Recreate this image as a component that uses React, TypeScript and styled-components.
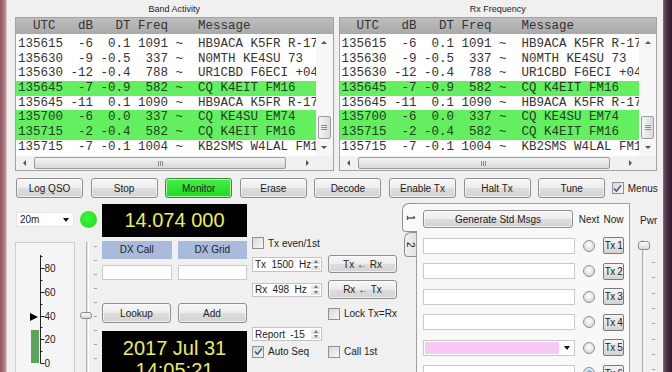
import React from 'react'
import styled, { createGlobalStyle, css } from 'styled-components'

type Decode = { utc: string; db: number; dt: string; freq: number; msg: string; cq?: boolean }

const decodes: Decode[] = [
  { utc: '135615', db: -6, dt: '0.1', freq: 1091, msg: 'HB9ACA K5FR R-17' },
  { utc: '135630', db: -9, dt: '-0.5', freq: 337, msg: 'N0MTH KE4SU 73' },
  { utc: '135630', db: -12, dt: '-0.4', freq: 788, msg: 'UR1CBD F6ECI +04' },
  { utc: '135645', db: -7, dt: '-0.9', freq: 582, msg: 'CQ K4EIT FM16', cq: true },
  { utc: '135645', db: -11, dt: '0.1', freq: 1090, msg: 'HB9ACA K5FR R-17' },
  { utc: '135700', db: -6, dt: '0.0', freq: 337, msg: 'CQ KE4SU EM74', cq: true },
  { utc: '135715', db: -2, dt: '-0.4', freq: 582, msg: 'CQ K4EIT FM16', cq: true },
  { utc: '135715', db: -7, dt: '-0.1', freq: 1004, msg: 'KB2SMS W4LAL FM18' },
]

const formatDecode = (d: Decode) =>
  `${d.utc} ${String(d.db).padStart(3)} ${d.dt.padStart(4)} ${String(d.freq).padStart(4)} ~  ${d.msg}`

const mainButtons = ['Log QSO', 'Stop', 'Monitor', 'Erase', 'Decode', 'Enable Tx', 'Halt Tx', 'Tune']

const txRows = [1, 2, 3, 4, 5, 6]

const GlobalStyle = createGlobalStyle`
  * { box-sizing: border-box; }
  html, body { margin: 0; padding: 0; background: #f0f0f0; }
  body {
    font-family: 'Liberation Sans', Arial, sans-serif;
    font-size: 10px;
    color: #222;
  }
`

const mono = css`
  font-family: 'Liberation Mono', 'Courier New', monospace;
  font-size: 12.5px;
  white-space: pre;
`

const DecodePanel: React.FC<{ title: string }> = ({ title }) => (
  <Panel>
    <PanelTitle>{title}</PanelTitle>
    <TableFrame>
      <TableHeader>{'  UTC   dB   DT Freq    Message'}</TableHeader>
      <TableBody>
        <RowList>
          {decodes.map((d, i) => (
            <DecodeRow key={i} $cq={d.cq}>
              {formatDecode(d)}
            </DecodeRow>
          ))}
        </RowList>
        <VScroll>
          <VScrollBtn>
            <Arrow $dir="up" />
          </VScrollBtn>
          <VTrack>
            <VThumb>
              <GripH />
            </VThumb>
          </VTrack>
          <VScrollBtn>
            <Arrow $dir="down" />
          </VScrollBtn>
        </VScroll>
      </TableBody>
      <HScroll>
        <HScrollBtn>
          <Arrow $dir="left" />
        </HScrollBtn>
        <HTrack>
          <HThumb>
            <GripV />
          </HThumb>
        </HTrack>
        <HScrollBtn>
          <Arrow $dir="right" />
        </HScrollBtn>
        <Corner />
      </HScroll>
    </TableFrame>
  </Panel>
)

const Check: React.FC<{ checked?: boolean; label: string }> = ({ checked, label }) => (
  <CheckItem>
    <CheckBox>
      {checked && (
        <svg width="9" height="9" viewBox="0 0 9 9">
          <path d="M1 4.6 L3.4 7.2 L8 1.4" fill="none" stroke="#3b4d7e" strokeWidth="1.5" />
        </svg>
      )}
    </CheckBox>
    {label}
  </CheckItem>
)

const Spin: React.FC<{ text: string; h?: number }> = ({ text, h = 15 }) => (
  <SpinBox $h={h}>
    <span>{text}</span>
    <SpinArrows>
      <SpinArrow />
      <SpinArrow $down />
    </SpinArrows>
  </SpinBox>
)

const Meter: React.FC = () => {
  const y = (v: number) => 120 - v * 1.1875
  const ticks = [0, 10, 20, 30, 40, 50, 60, 70, 80, 90]
  return (
    <MeterPanel>
      <svg width="58" height="140">
        <rect x="15" y={y(27.8)} width="8" height={y(0) - y(27.8)} fill="#5aa55a" />
        <line x1="24.5" y1={y(91)} x2="24.5" y2={y(0) + 0.5} stroke="#222" />
        {ticks.map((v) => (
          <line
            key={v}
            x1="24.5"
            x2={v % 20 === 0 ? 28.5 : 26.5}
            y1={Math.round(y(v)) + 0.5}
            y2={Math.round(y(v)) + 0.5}
            stroke="#222"
          />
        ))}
        {[0, 20, 40, 60, 80].map((v) => (
          <text key={v} x="28.5" y={Math.round(y(v)) + 4} fontSize="10" fill="#222" fontFamily="Liberation Sans, Arial, sans-serif">
            {v}
          </text>
        ))}
        <polygon points={`14,${y(38.7) - 4} 22,${y(38.7)} 14,${y(38.7) + 4}`} fill="#000" />
      </svg>
    </MeterPanel>
  )
}

type SliderProps = {
  w: number
  grooveX: number
  handleX: number
  handleY: number
  handleW: number
  handleH: number
  tickX: number
  tickTop: number
  pitch: number
}

const VSlider: React.FC<SliderProps> = (p) => (
  <SliderBox $w={p.w}>
    <Groove $x={p.grooveX} />
    <Ticks $x={p.tickX} $top={p.tickTop} $pitch={p.pitch} />
    <Handle $x={p.handleX} $y={p.handleY} $w={p.handleW} $h={p.handleH} />
  </SliderBox>
)

export default function App() {
  return (
    <>
      <GlobalStyle />
      <Screen>
        <LeftFrame />
        <Window>
          <TopSection>
            <DecodePanel title="Band Activity" />
            <DecodePanel title="Rx Frequency" />
          </TopSection>

          <ButtonRow>
            {mainButtons.map((b) => (
              <PushButton key={b} $on={b === 'Monitor'}>
                {b}
              </PushButton>
            ))}
            <MenusCheck>
              <Check checked label="Menus" />
            </MenusCheck>
          </ButtonRow>

          <Controls>
            <ColumnA>
              <BandCombo>
                20m
                <DropArrow />
              </BandCombo>
              <Meter />
            </ColumnA>

            <ColumnB>
              <Led />
              <SliderWrap>
                <VSlider w={17} grooveX={6} handleX={0} handleY={70} handleW={12} handleH={7} tickX={14} tickTop={4} pitch={14} />
              </SliderWrap>
            </ColumnB>

            <ColumnC>
              <FreqDisplay>14.074 000</FreqDisplay>
              <PairRow $top={4}>
                <DxLabel>DX Call</DxLabel>
                <DxLabel>DX Grid</DxLabel>
              </PairRow>
              <PairRow $top={6}>
                <TextField $h={15} />
                <TextField $h={15} />
              </PairRow>
              <PairRow $top={23}>
                <PushButton $w={69} $h={20}>Lookup</PushButton>
                <PushButton $w={69} $h={20}>Add</PushButton>
              </PairRow>
              <DateDisplay>
                <div>2017 Jul 31</div>
                <div>14:05:21</div>
              </DateDisplay>
            </ColumnC>

            <ColumnD>
              <CtlRow $top={33} $h={12}>
                <Check label="Tx even/1st" />
              </CtlRow>
              <CtlRow $top={6} $h={18}>
                <Spin text="Tx 1500 Hz" />
                <PushButton $w={69} $h={18}>Tx ← Rx</PushButton>
              </CtlRow>
              <CtlRow $top={7} $h={19}>
                <Spin text="Rx 498 Hz" h={14} />
                <PushButton $w={69} $h={19}>Rx ← Tx</PushButton>
              </CtlRow>
              <CtlRow $top={8} $h={13}>
                <span />
                <Check label="Lock Tx=Rx" />
              </CtlRow>
              <CtlRow $top={7} $h={14}>
                <Spin text="Report -15" h={14} />
              </CtlRow>
              <CtlRow $top={4} $h={13}>
                <Check checked label="Auto Seq" />
                <Check label="Call 1st" />
              </CtlRow>
            </ColumnD>

            <TabWidget>
              <TabBar>
                <Tab $sel>1</Tab>
                <Tab>2</Tab>
              </TabBar>
              <TabPane>
                <PaneRow $top={0} $h={18}>
                  <GenerateButton $w={150} $h={18}>
                    Generate Std Msgs
                  </GenerateButton>
                  <ColLabel>Next</ColLabel>
                  <ColLabel>Now</ColLabel>
                </PaneRow>
                {txRows.map((n) => (
                  <PaneRow key={n} $top={n === 1 ? 9 : 8.5} $h={17}>
                    {n === 5 ? (
                      <MsgCombo>
                        <PinkFill />
                        <DropArrow />
                      </MsgCombo>
                    ) : (
                      <TextField $h={16} />
                    )}
                    <Radio $on={n === 6} />
                    <TxButton>Tx {n}</TxButton>
                  </PaneRow>
                ))}
              </TabPane>
            </TabWidget>

            <PwrColumn>
              <PwrLabel>Pwr</PwrLabel>
              <SliderWrap>
                <VSlider w={22} grooveX={7} handleX={3} handleY={1} handleW={12} handleH={9} tickX={17} tickTop={22} pitch={15.3} />
              </SliderWrap>
            </PwrColumn>
          </Controls>
        </Window>
        <RightFrame />
      </Screen>
    </>
  )
}

const Screen = styled.div`
  display: flex;
  width: 672px;
  height: 372px;
  overflow: hidden;
`

const LeftFrame = styled.div`
  flex: 0 0 7px;
  background: linear-gradient(to right, #8c5862 0%, #a66e78 50%, #c49ca2 82%, #e6dadb 100%);
`

const RightFrame = styled.div`
  flex: 1;
  background: linear-gradient(to right, #8e8490 0px, #6a4c64 1px, #4c2e46 4px, #2e1a2c 100%);
`

const Window = styled.div`
  flex: 0 0 656px;
  display: flex;
  flex-direction: column;
  padding: 0 6px 0 8px;
  background: #f0f0f0;
  overflow: hidden;
`

const TopSection = styled.div`
  flex: none;
  display: grid;
  grid-template-columns: 1fr 1fr;
  column-gap: 5px;
`

const Panel = styled.div`
  display: flex;
  flex-direction: column;
  min-width: 0;
`

const PanelTitle = styled.div`
  height: 17px;
  line-height: 18px;
  text-align: center;
  font-size: 9px;
  color: #222;
`

const TableFrame = styled.div`
  height: 154px;
  display: flex;
  flex-direction: column;
  border: 1px solid #a3a3a3;
  background: #fff;
`

const TableHeader = styled.div`
  ${mono};
  flex: 0 0 16px;
  line-height: 16px;
  padding-left: 2px;
  color: #333;
  background: linear-gradient(#bdbdbd, #a9a9a9);
`

const TableBody = styled.div`
  flex: 0 0 122px;
  display: flex;
  overflow: hidden;
`

const RowList = styled.div`
  flex: 1;
  min-width: 0;
  padding-top: 3px;
  overflow: hidden;
`

const DecodeRow = styled.div<{ $cq?: boolean }>`
  ${mono};
  height: 14.7px;
  line-height: 14.7px;
  padding-left: 2px;
  overflow: hidden;
  color: ${(p) => (p.$cq ? '#1f3d1f' : '#333')};
  background: ${(p) => (p.$cq ? '#63ef5f' : 'transparent')};
`

const VScroll = styled.div`
  flex: 0 0 17px;
  display: flex;
  flex-direction: column;
  background: #f7f7f7;
`

const VScrollBtn = styled.div`
  flex: 0 0 17px;
  display: flex;
  align-items: center;
  justify-content: center;
`

const HScrollBtn = styled.div`
  flex: 0 0 17px;
  display: flex;
  align-items: center;
  justify-content: center;
`

const Arrow = styled.div<{ $dir: 'up' | 'down' | 'left' | 'right' }>`
  width: 0;
  height: 0;
  ${(p) =>
    p.$dir === 'up'
      ? 'border-left: 3px solid transparent; border-right: 3px solid transparent; border-bottom: 3px solid #555;'
      : p.$dir === 'down'
      ? 'border-left: 3px solid transparent; border-right: 3px solid transparent; border-top: 3px solid #555;'
      : p.$dir === 'left'
      ? 'border-top: 3px solid transparent; border-bottom: 3px solid transparent; border-right: 3px solid #555;'
      : 'border-top: 3px solid transparent; border-bottom: 3px solid transparent; border-left: 3px solid #555;'}
`

const VTrack = styled.div`
  flex: 1;
  display: flex;
  flex-direction: column;
  justify-content: flex-end;
  padding: 0 2px;
`

const VThumb = styled.div`
  height: 23px;
  border: 1px solid #9c9c9c;
  border-radius: 2px;
  background: linear-gradient(to right, #f4f4f4, #dadada);
  display: flex;
  align-items: center;
  justify-content: center;
`

const GripH = styled.div`
  width: 6px;
  height: 5px;
  background: repeating-linear-gradient(to bottom, #8a8a8a 0 1px, transparent 1px 2px);
`

const HScroll = styled.div`
  flex: 0 0 14px;
  display: flex;
  background: #f1f1f1;
`

const HTrack = styled.div`
  flex: 1;
  display: flex;
  align-items: center;
  padding-left: 1px;
`

const HThumb = styled.div`
  width: 252px;
  height: 12px;
  border: 1px solid #9c9c9c;
  border-radius: 2px;
  background: linear-gradient(#f4f4f4, #d8d8d8);
  display: flex;
  align-items: center;
  justify-content: center;
`

const GripV = styled.div`
  width: 5px;
  height: 5px;
  background: repeating-linear-gradient(to right, #8a8a8a 0 1px, transparent 1px 2px);
`

const Corner = styled.div`
  flex: 0 0 17px;
  background: #f0f0f0;
`

const ButtonRow = styled.div`
  flex: none;
  display: flex;
  align-items: center;
  gap: 7.6px;
  height: 20px;
  margin-top: 7px;
  padding-left: 1px;
`

const PushButton = styled.button<{ $on?: boolean; $w?: number; $h?: number }>`
  flex: none;
  width: ${(p) => p.$w ?? 67}px;
  height: ${(p) => p.$h ?? 20}px;
  padding: 0;
  font: 10px 'Liberation Sans', Arial, sans-serif;
  color: #222;
  white-space: nowrap;
  border: 1px solid ${(p) => (p.$on ? '#3a8a3a' : '#8f8f8f')};
  border-radius: 3px;
  background: ${(p) =>
    p.$on
      ? 'linear-gradient(#46ee46, #20da20)'
      : 'linear-gradient(#f7f7f7 0%, #ededed 48%, #dddddd 52%, #d3d3d3 100%)'};
  box-shadow: inset 0 0 0 1px rgba(255, 255, 255, 0.6);
`

const GenerateButton = styled(PushButton)`
  justify-self: start;
`

const MenusCheck = styled.div`
  margin-left: -1px;
`

const CheckItem = styled.label`
  display: flex;
  align-items: center;
  gap: 4px;
  font-size: 10px;
  color: #222;
  white-space: nowrap;
`

const CheckBox = styled.span`
  flex: none;
  width: 12px;
  height: 12px;
  border: 1px solid #8e8f8f;
  background: linear-gradient(135deg, #d6d6d6, #f8f8f8);
  display: flex;
  align-items: center;
  justify-content: center;
`

const Controls = styled.div`
  display: flex;
  align-items: flex-start;
  gap: 5px;
  padding-top: 6px;
  flex: 1;
  min-height: 0;
`

const ColumnA = styled.div`
  flex: 0 0 60px;
  display: flex;
  flex-direction: column;
`

const BandCombo = styled.div`
  flex: none;
  margin: 8px 1px 0;
  height: 15px;
  background: #fff;
  border: 1px solid #e4e4e4;
  display: flex;
  align-items: center;
  justify-content: space-between;
  padding: 0 4px 0 3px;
  font-size: 10px;
`

const DropArrow = styled.span`
  flex: none;
  width: 0;
  height: 0;
  border-left: 3.5px solid transparent;
  border-right: 3.5px solid transparent;
  border-top: 4px solid #111;
`

const MeterPanel = styled.div`
  margin-top: 15px;
  height: 140px;
  flex: none;
  border: 1px solid #cdcdcd;
  background: #f5f5f5;
`

const ColumnB = styled.div`
  flex: 0 0 17px;
  display: flex;
  flex-direction: column;
`

const Led = styled.div`
  flex: none;
  margin-top: 7px;
  width: 17px;
  height: 17px;
  border-radius: 50%;
  background: radial-gradient(circle at 45% 40%, #3cf53c, #1cdc1c);
`

const SliderWrap = styled.div`
  flex: none;
  margin-top: 14px;
`

const SliderBox = styled.div<{ $w: number }>`
  position: relative;
  width: ${(p) => p.$w}px;
  height: 140px;
`

const Groove = styled.div<{ $x: number }>`
  position: absolute;
  left: ${(p) => p.$x}px;
  top: 0;
  bottom: 0;
  width: 3px;
  background: #e4e4e4;
  border-left: 1px solid #b0b0b0;
  border-right: 1px solid #fff;
`

const Ticks = styled.div<{ $x: number; $top: number; $pitch: number }>`
  position: absolute;
  left: ${(p) => p.$x}px;
  top: ${(p) => p.$top}px;
  bottom: 0;
  width: 3px;
  background: repeating-linear-gradient(to bottom, #a0a0a0 0 1px, transparent 1px ${(p) => p.$pitch}px);
`

const Handle = styled.div<{ $x: number; $y: number; $w: number; $h: number }>`
  position: absolute;
  left: ${(p) => p.$x}px;
  top: ${(p) => p.$y}px;
  width: ${(p) => p.$w}px;
  height: ${(p) => p.$h}px;
  border: 1px solid #8a8a8a;
  border-radius: 3px;
  background: linear-gradient(#fbfbfb, #d8d8d8);
`

const ColumnC = styled.div`
  flex: 0 0 145px;
  display: flex;
  flex-direction: column;
`

const FreqDisplay = styled.div`
  height: 33px;
  flex: none;
  background: #000;
  color: #ecec5c;
  font-size: 20px;
  line-height: 33px;
  text-align: center;
`

const PairRow = styled.div<{ $top: number }>`
  flex: none;
  display: grid;
  grid-template-columns: 1fr 1fr;
  column-gap: 6px;
  margin-top: ${(p) => p.$top}px;
`

const DxLabel = styled.div`
  height: 18px;
  line-height: 18px;
  text-align: center;
  background: #a9bbdc;
  font-size: 10px;
  color: #222;
`

const TextField = styled.div<{ $h: number }>`
  height: ${(p) => p.$h}px;
  width: 100%;
  background: #fff;
  border: 1px solid #cacaca;
`

const DateDisplay = styled.div`
  margin-top: 8px;
  height: 60px;
  flex: none;
  padding-top: 6px;
  background: #000;
  color: #ecec5c;
  font-size: 20px;
  line-height: 22px;
  text-align: center;
`

const ColumnD = styled.div`
  flex: 0 0 145px;
  display: flex;
  flex-direction: column;
`

const CtlRow = styled.div<{ $top: number; $h: number }>`
  flex: none;
  display: grid;
  grid-template-columns: 70px 69px;
  column-gap: 6px;
  align-items: center;
  margin-top: ${(p) => p.$top}px;
  height: ${(p) => p.$h}px;
`

const SpinBox = styled.div<{ $h: number }>`
  display: flex;
  align-items: center;
  height: ${(p) => p.$h}px;
  padding: 1px 1px 1px 2px;
  background: #fff;
  border: 1px solid #c2c4c8;
  font-size: 10px;
  word-spacing: 2.5px;
  white-space: nowrap;
`

const SpinArrows = styled.div`
  margin-left: auto;
  width: 9px;
  height: 100%;
  display: flex;
  flex-direction: column;
  gap: 1px;
`

const SpinArrow = styled.div<{ $down?: boolean }>`
  flex: 1;
  display: flex;
  align-items: center;
  justify-content: center;
  background: linear-gradient(#f2f2f2, #dcdcdc);
  border-radius: 1px;
  &::after {
    content: '';
    border-left: 2.5px solid transparent;
    border-right: 2.5px solid transparent;
    ${(p) => (p.$down ? 'border-top: 3px solid #777;' : 'border-bottom: 3px solid #777;')}
  }
`

const TabWidget = styled.div`
  flex: 0 0 228px;
  align-self: stretch;
  display: flex;
  margin-top: -1px;
`

const TabBar = styled.div`
  flex: 0 0 14px;
  display: flex;
  flex-direction: column;
  align-items: flex-end;
`

const Tab = styled.div<{ $sel?: boolean }>`
  flex: none;
  position: relative;
  z-index: ${(p) => (p.$sel ? 1 : 0)};
  width: ${(p) => (p.$sel ? 15 : 12)}px;
  height: ${(p) => (p.$sel ? 29 : 25)}px;
  margin-right: ${(p) => (p.$sel ? -1 : 0)}px;
  border: 1px solid #8e9096;
  border-right: none;
  border-radius: 7px 0 0 4px;
  background: ${(p) => (p.$sel ? '#fafafa' : 'linear-gradient(to right, #f2f2f2, #e2e2e2)')};
  writing-mode: vertical-rl;
  display: flex;
  align-items: center;
  justify-content: center;
  font-size: 10px;
  color: #222;
`

const TabPane = styled.div`
  flex: 1;
  display: flex;
  flex-direction: column;
  border: 1px solid #a0a0a0;
  border-bottom: none;
  background: #f8f8f8;
  padding: 6px 4px 0 6px;
  overflow: hidden;
`

const PaneRow = styled.div<{ $top: number; $h: number }>`
  flex: none;
  display: grid;
  grid-template-columns: 152px 12px 21px;
  column-gap: 8px;
  align-items: center;
  justify-items: center;
  margin-top: ${(p) => p.$top}px;
  height: ${(p) => p.$h}px;
`

const ColLabel = styled.span`
  font-size: 10px;
  color: #222;
  white-space: nowrap;
`

const MsgCombo = styled.div`
  width: 100%;
  height: 16px;
  display: flex;
  align-items: center;
  gap: 5px;
  padding: 1px 4px 1px 1px;
  background: #fff;
  border: 1px solid #cacaca;
`

const PinkFill = styled.div`
  flex: 1;
  height: 100%;
  background: #f8c8f4;
`

const Radio = styled.span<{ $on?: boolean }>`
  width: 12px;
  height: 12px;
  border-radius: 50%;
  border: 1px solid #8e8f8f;
  background: radial-gradient(circle at 50% 40%, #fff 0%, #e6e6e6 50%, #cdcdcd 100%);
  display: flex;
  align-items: center;
  justify-content: center;
  &::after {
    content: '';
    width: 6px;
    height: 6px;
    border-radius: 50%;
    background: ${(p) => (p.$on ? 'radial-gradient(circle at 40% 35%, #a6d4ff, #2d6cb2)' : 'transparent')};
  }
`

const TxButton = styled.button`
  width: 21px;
  height: 17px;
  padding: 0;
  font: 10px 'Liberation Sans', Arial, sans-serif;
  letter-spacing: -0.5px;
  color: #222;
  white-space: nowrap;
  border: 1px solid #7a7a7a;
  border-radius: 2px;
  background: linear-gradient(#f4f4f4 0%, #e6e6e6 50%, #d2d2d2 100%);
`

const PwrColumn = styled.div`
  flex: 0 0 22px;
  display: flex;
  flex-direction: column;
`

const PwrLabel = styled.div`
  flex: none;
  margin-top: 12px;
  height: 10px;
  line-height: 10px;
  padding-left: 5px;
  font-size: 10px;
  color: #222;
`
